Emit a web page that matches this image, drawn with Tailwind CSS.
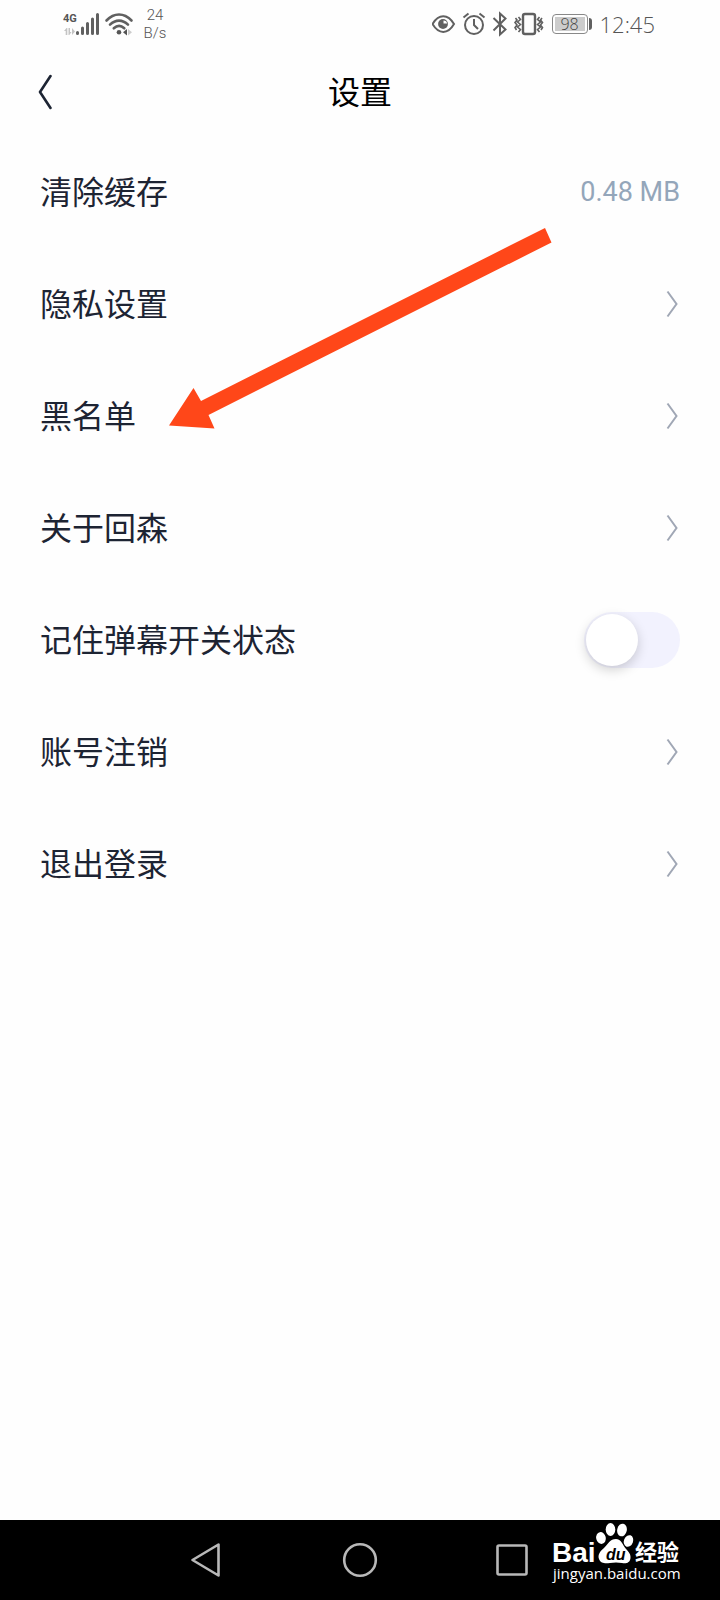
<!DOCTYPE html>
<html lang="zh-CN">
<head>
<meta charset="utf-8">
<meta name="viewport" content="width=device-width, initial-scale=1">
<title>设置</title>
<script src="https://cdn.jsdelivr.net/npm/@tailwindcss/browser@4"></script>
</head>
<body class="flex min-h-screen flex-col bg-[#fefefe] font-['Noto_Sans_CJK_SC',sans-serif] text-[#1d2433]">

<!-- Status bar -->
<div class="flex h-12 items-center justify-between pl-[62px] pr-[65px] text-[#666]">
  <div class="flex items-center">
    <svg class="h-12 w-[72px]" viewBox="62 0 72 48" fill="none" role="img" aria-label="4G, Wi-Fi">
      <text x="63" y="22" fill="#555" class="font-['Roboto',sans-serif] text-[11px] font-bold">4G</text>
      <g stroke="#606060" stroke-width="3" stroke-linecap="round">
        <path d="M77.500 32.500v1M82.500 28v5.500M87.500 23.500v10M92.500 19v14.500M97.500 14.500v19"/>
      </g>
      <g fill="#c4c4c4"><path d="M66.500 28l-2.500 3h1.700v4h1.600v-7zM68.500 28v7h.8l2.200-3h-1.500v-4zM72 28v7l3-3.500z"/></g>
      <g stroke="#606060" stroke-width="2.600" stroke-linecap="round">
        <path d="M106.500 20.500c7.500-8 17.500-8 25 0M110 24.700c5.500-5.500 12.500-5.500 18 0M113.800 28.300c3.300-3.200 7.200-3.200 10.500 0"/>
      </g>
      <circle cx="119" cy="32.300" r="2.300" fill="#555"/>
      <path d="M127 29v6.500l-4-3.200z" fill="#555"/><path d="M128 29v6.500l4-3.200z" fill="#ccc"/>
    </svg>
    <div class="w-[42px] text-center font-['Roboto',sans-serif] text-[15px] font-light leading-[18px] text-[#555]">24<br>B/s</div>
  </div>
  <div class="flex items-center gap-2">
    <svg class="h-12 w-[112px]" viewBox="432 0 112 48" fill="none" stroke="#606060" stroke-width="2" role="img" aria-label="护眼, 闹钟, 蓝牙, 振动">
      <path d="M432.500 24c6-10.500 15.500-10.500 21.500 0-6 10.500-15.500 10.500-21.500 0z"/>
      <circle cx="443" cy="24" r="4.900" fill="#606060" stroke="none"/><path d="M443.500 20.500v3h3.500c0-2-1.500-3-3.500-3z" fill="#fff" stroke="none"/>
      <circle cx="474" cy="25" r="9"/><path d="M474 19v6l4 4M463.500 17.500l5-4M484.500 17.500l-5-4"/>
      <path d="M493.500 18l12 11.500-5.500 5V13.500l5.500 5L493.500 30.500"/>
      <rect x="523" y="14" width="12" height="20" rx="2" stroke-width="2.400"/>
      <path d="M518.500 17l2 2.500-3 2.500 3 2.500-3 2.500 3 2.500-2 2.500M539.500 17l-2 2.500 3 2.500-3 2.500 3 2.500-3 2.500 2 2.500M515.500 18l1.500 2-2 2.500 2 2.500-2 2.500 1.500 2.500M542 18l-1.500 2 2 2.500-2 2.500 2 2.500-1.500 2.500" stroke-width="1.600"/>
    </svg>
    <div class="flex items-center gap-px">
      <div class="flex h-5 w-9 rounded-sm border border-[#888] p-[2px]">
        <span class="flex flex-1 items-center justify-center bg-[#ccc] font-['Open_Sans',sans-serif] text-[16px] font-light leading-4 text-[#444]">98</span>
      </div>
      <span class="h-3 w-[3px] rounded-r-sm bg-[#606060]"></span>
    </div>
    <span class="font-['Open_Sans',sans-serif] text-[22px] font-light leading-6 text-[#555]">12:45</span>
  </div>
</div>

<!-- Title bar -->
<header class="grid h-[88px] grid-cols-[1fr_auto_1fr] items-center px-9">
  <button type="button" aria-label="返回" class="flex h-12 w-12 items-center">
    <svg class="h-9 w-4" viewBox="0 0 16 36" fill="none" stroke="#1d2433" stroke-width="2.600" stroke-linecap="round" stroke-linejoin="round"><path d="M14.500 2L4 18l10.500 16"/></svg>
  </button>
  <h1 class="pb-1 text-[32px] leading-10 text-black">设置</h1>
</header>

<main class="relative flex-1">
  <ul class="text-[32px] leading-10">
    <li><button type="button" class="flex h-28 w-full items-center justify-between px-10"><span class="pb-1">清除缓存</span><span class="font-['Roboto',sans-serif] text-[27px] text-[#94a6ba]">0.48 MB</span></button></li>
    <li><a href="#privacy" class="flex h-28 items-center justify-between px-10"><span class="pb-1">隐私设置</span><svg class="h-7 w-4" viewBox="0 0 16 28" fill="none" stroke="#a0a7b5" stroke-width="2"><path d="M3.500 1.500L12.500 14l-9 12.500"/></svg></a></li>
    <li><a href="#blacklist" class="flex h-28 items-center justify-between px-10"><span class="pb-1">黑名单</span><svg class="h-7 w-4" viewBox="0 0 16 28" fill="none" stroke="#a0a7b5" stroke-width="2"><path d="M3.500 1.500L12.500 14l-9 12.500"/></svg></a></li>
    <li><a href="#about" class="flex h-28 items-center justify-between px-10"><span class="pb-1">关于回森</span><svg class="h-7 w-4" viewBox="0 0 16 28" fill="none" stroke="#a0a7b5" stroke-width="2"><path d="M3.500 1.500L12.500 14l-9 12.500"/></svg></a></li>
    <li class="flex h-28 items-center justify-between px-10">
      <label for="danmu" class="pb-1">记住弹幕开关状态</label>
      <input id="danmu" type="checkbox" role="switch" class="flex h-14 w-24 appearance-none items-center rounded-full bg-[#f2f2fe] p-[2px] before:size-[52px] before:rounded-full before:bg-white before:shadow-[0_4px_12px_rgba(0,0,0,0.18)] before:content-[''] checked:justify-end checked:bg-indigo-400">
    </li>
    <li><a href="#account" class="flex h-28 items-center justify-between px-10"><span class="pb-1">账号注销</span><svg class="h-7 w-4" viewBox="0 0 16 28" fill="none" stroke="#a0a7b5" stroke-width="2"><path d="M3.500 1.500L12.500 14l-9 12.500"/></svg></a></li>
    <li><a href="#logout" class="flex h-28 items-center justify-between px-10"><span class="pb-1">退出登录</span><svg class="h-7 w-4" viewBox="0 0 16 28" fill="none" stroke="#a0a7b5" stroke-width="2"><path d="M3.500 1.500L12.500 14l-9 12.500"/></svg></a></li>
  </ul>
  <!-- Arrow pointing at the blacklist entry -->
  <svg class="pointer-events-none absolute left-40 top-[84px] h-[220px] w-[400px]" viewBox="160 220 400 220" aria-hidden="true">
    <path d="M545 228L551.500 242.500 208.500 415 214.500 428.500 169 425.500 193.500 388 201 401z" fill="#ff4719"/>
  </svg>
</main>

<!-- System navigation -->
<nav class="relative flex h-20 items-center justify-center gap-[100px] bg-black">
  <button type="button" aria-label="后退" class="size-[52px]"><svg viewBox="0 0 52 52" fill="none" stroke="#b8b8b8" stroke-width="2.600" stroke-linejoin="round"><path d="M36.500 10.500v31L10.500 26z"/></svg></button>
  <button type="button" aria-label="主页" class="size-[52px]"><svg viewBox="0 0 52 52" fill="none" stroke="#b8b8b8" stroke-width="2.600"><circle cx="26" cy="26" r="15.800"/></svg></button>
  <button type="button" aria-label="最近任务" class="size-[52px]"><svg viewBox="0 0 52 52" fill="none" stroke="#b8b8b8" stroke-width="2.600"><rect x="11.500" y="11.500" width="29" height="29" rx="1.500"/></svg></button>
  <svg class="absolute right-8 top-0 h-20 w-[138px]" viewBox="550 1520 138 80" fill="#fff" role="img" aria-label="Baidu 经验 jingyan.baidu.com">
    <text x="552" y="1562" class="font-['Liberation_Sans',sans-serif] text-[28px] font-bold">Bai</text>
    <ellipse cx="601" cy="1538" rx="4.800" ry="6" transform="rotate(-12 601 1538)"/>
    <ellipse cx="610.500" cy="1529.500" rx="4.800" ry="6.400"/>
    <ellipse cx="622" cy="1530" rx="4.800" ry="6.400" transform="rotate(12 622 1530)"/>
    <ellipse cx="628.500" cy="1541" rx="4.600" ry="6" transform="rotate(20 628.500 1541)"/>
    <path d="M616 1539c-6 0-8 5-12 9-4 3-6.500 7-5 11 2 5 7 4.500 11 4 4-.7 8-.7 12 0 4 .8 8 0 8.500-5 .5-5-3-7-6-11-2.500-4-4-8-8.500-8z"/>
    <text x="606" y="1560" fill="#000" class="font-['Liberation_Sans',sans-serif] text-[16px] font-bold italic">du</text>
    <text x="635" y="1560" class="font-['Noto_Sans_CJK_SC',sans-serif] text-[22px] font-bold">经验</text>
    <text x="553" y="1579" class="font-['Open_Sans',sans-serif] text-[15px] font-medium">jingyan.baidu.com</text>
  </svg>
</nav>
</body>
</html>
